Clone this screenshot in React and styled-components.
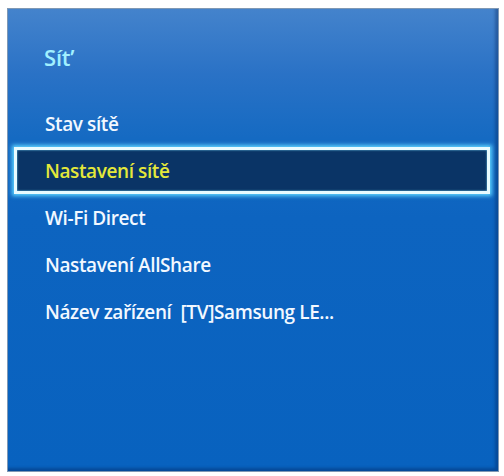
import React from 'react';
import styled, { createGlobalStyle } from 'styled-components';

const items = [
	'Stav sítě',
	'Nastavení sítě',
	'Wi-Fi Direct',
	'Nastavení AllShare',
	'Název zařízení  [TV]Samsung LE...',
];

const App = () => {
	return (
		<>
			<GlobalStyle />
			<Panel>
				<Title>Sít’</Title>
				<Menu>
					{items.map((label, i) => (
						<Item key={label} selected={i === 1}>{label}</Item>
					))}
				</Menu>
			</Panel>
		</>
	)
}

const GlobalStyle = createGlobalStyle`
	html, body {
		margin: 0;
		background: #fff;
	}
	body {
		font-family: "Open Sans", "DejaVu Sans", sans-serif;
	}
`

const Panel = styled.div`
	box-sizing: border-box;
	width: 492px;
	height: 464px;
	margin: 8px 0 0 7px;
	border: 1px solid #7f98b4;
	box-shadow: inset -3px -3px 3px rgba(0, 30, 80, 0.35);
	background: linear-gradient(to bottom, #4483cc 0%, #2a72c6 14%, #156ac2 28%, #0d64c0 45%, #0862bf 100%);
	display: flex;
	flex-direction: column;
`

const Title = styled.div`
	padding: 34px 0 29px 36px;
	height: 28px;
	line-height: 28px;
	font-size: 22px;
	font-weight: 600;
	color: #a0f0ff;
	letter-spacing: -0.2px;
`

const Menu = styled.div`
	display: flex;
	flex-direction: column;
	padding: 0 8px 0 6px;
`

const Item = styled.div`
	box-sizing: border-box;
	height: 47px;
	display: flex;
	align-items: center;
	padding-left: ${p => (p.selected ? '28px' : '31px')};
	font-size: 19px;
	font-weight: 600;
	letter-spacing: -0.4px;
	white-space: pre;
	color: ${p => (p.selected ? '#e4e83a' : '#f2f8ff')};
	background: ${p => (p.selected ? '#0a3466' : 'transparent')};
	border: ${p => (p.selected ? '3px solid #e8fbff' : 'none')};
	box-shadow: ${p => (p.selected ? '0 0 4px 2px #5fd3ff, inset 0 0 2px #7fdfff' : 'none')};
`

export default App
